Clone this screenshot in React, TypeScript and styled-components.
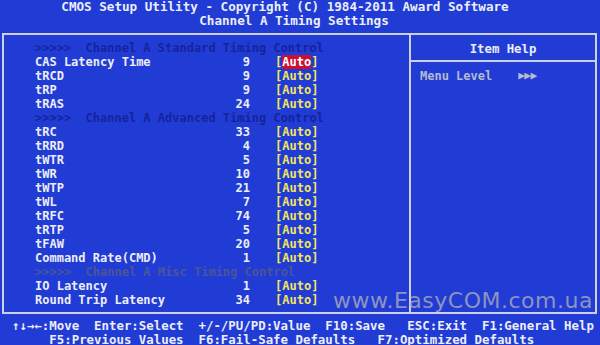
import React from "react";
import styled, { createGlobalStyle } from "styled-components";

const Global = createGlobalStyle`
  html, body { margin: 0; padding: 0; background: #213cd5; }
  #root { width: 600px; height: 345px; }
`;

const BLUE = "#213cd5";
const LINE = "#cdd0e2";
const MONO = `"DejaVu Sans Mono", "Liberation Mono", monospace`;

const Screen = styled.div`
  position: relative;
  width: 600px;
  height: 345px;
  overflow: hidden;
  background: ${BLUE};
  font-family: ${MONO};
  font-weight: bold;
  color: #eceef8;
  display: flex;
  flex-direction: column;
  & > * { flex-shrink: 0; }
`;

const Header = styled.header`
  display: flex;
  flex-direction: column;
  align-items: center;
  font-size: 12.6px;
  line-height: 13.5px;
  white-space: pre;
`;

const TitleLine = styled.div<{ $shift: number }>`
  margin-right: ${(p) => p.$shift}px;
`;

const Frame = styled.main`
  margin: 6px 3px 0 2px;
  height: 281px;
  box-sizing: border-box;
  border: 2px solid ${LINE};
  display: grid;
  grid-template-columns: 405px 1fr;
`;

const LeftPanel = styled.section`
  padding: 6px 0 0 31px;
  display: flex;
  flex-direction: column;
  font-size: 12px;
  line-height: 14px;
`;

const Row = styled.div`
  display: grid;
  grid-template-columns: 180px 35px 1fr;
  white-space: pre;
`;

const GroupTitle = styled.div<{ $dim?: boolean }>`
  white-space: pre;
  color: ${(p) => (p.$dim ? "#4a5598" : "#16239c")};
`;

const Label = styled.span``;

const Value = styled.span`
  text-align: right;
`;

const Option = styled.span`
  padding-left: 25px;
  color: #f1e65a;
`;

const OptionText = styled.span<{ $active?: boolean }>`
  background: ${(p) => (p.$active ? "#cc1030" : "transparent")};
  color: ${(p) => (p.$active ? "#ffffff" : "#f1e65a")};
`;

const RightPanel = styled.aside`
  border-left: 2px solid ${LINE};
  display: flex;
  flex-direction: column;
`;

const HelpHead = styled.div`
  height: 27px;
  border-bottom: 2px solid ${LINE};
  display: flex;
  align-items: center;
  justify-content: center;
  font-size: 12.3px;
  padding-top: 2px;
  box-sizing: border-box;
`;

const HelpBody = styled.div`
  padding: 7px 0 0 9px;
  font-size: 12px;
  line-height: 14px;
  color: #b6bad2;
  white-space: pre;
  display: flex;
  align-items: center;
`;

const Arrows = styled.span`
  margin-left: 26px;
  font-size: 11px;
  letter-spacing: -0.5px;
`;

const Footer = styled.footer`
  margin-top: 5px;
  padding-left: 12px;
  font-size: 12.4px;
  line-height: 14px;
  white-space: pre;
`;

const Watermark = styled.div`
  position: absolute;
  left: 333px;
  top: 288px;
  font-family: "DejaVu Sans", Verdana, sans-serif;
  font-weight: normal;
  font-size: 22px;
  letter-spacing: 0.5px;
  color: rgba(178, 178, 182, 0.75);
  white-space: nowrap;
`;

type Item =
  | { kind: "group"; text: string; dim?: boolean }
  | { kind: "row"; label: string; value: string; active?: boolean };

const items: Item[] = [
  { kind: "group", text: ">>>>>  Channel A Standard Timing Control" },
  { kind: "row", label: "CAS Latency Time", value: "9", active: true },
  { kind: "row", label: "tRCD", value: "9" },
  { kind: "row", label: "tRP", value: "9" },
  { kind: "row", label: "tRAS", value: "24" },
  { kind: "group", text: ">>>>>  Channel A Advanced Timing Control" },
  { kind: "row", label: "tRC", value: "33" },
  { kind: "row", label: "tRRD", value: "4" },
  { kind: "row", label: "tWTR", value: "5" },
  { kind: "row", label: "tWR", value: "10" },
  { kind: "row", label: "tWTP", value: "21" },
  { kind: "row", label: "tWL", value: "7" },
  { kind: "row", label: "tRFC", value: "74" },
  { kind: "row", label: "tRTP", value: "5" },
  { kind: "row", label: "tFAW", value: "20" },
  { kind: "row", label: "Command Rate(CMD)", value: "1" },
  { kind: "group", text: ">>>>>  Channel A Misc Timing Control", dim: true },
  { kind: "row", label: "IO Latency", value: "1" },
  { kind: "row", label: "Round Trip Latency", value: "34" },
];

export default function App() {
  return (
    <>
      <Global />
      <Screen>
        <Header>
          <TitleLine $shift={30}>CMOS Setup Utility - Copyright (C) 1984-2011 Award Software</TitleLine>
          <TitleLine $shift={12}>Channel A Timing Settings</TitleLine>
        </Header>
        <Frame>
          <LeftPanel>
            {items.map((it, i) =>
              it.kind === "group" ? (
                <GroupTitle key={i} $dim={it.dim}>{it.text}</GroupTitle>
              ) : (
                <Row key={i}>
                  <Label>{it.label}</Label>
                  <Value>{it.value}</Value>
                  <Option>
                    [<OptionText $active={it.active}>Auto</OptionText>]
                  </Option>
                </Row>
              )
            )}
          </LeftPanel>
          <RightPanel>
            <HelpHead>Item Help</HelpHead>
            <HelpBody>
              Menu Level<Arrows>▶▶▶</Arrows>
            </HelpBody>
          </RightPanel>
        </Frame>
        <Footer>
          <div>{"↑↓→←:Move  Enter:Select  +/-/PU/PD:Value  F10:Save   ESC:Exit  F1:General Help"}</div>
          <div>{"     F5:Previous Values  F6:Fail-Safe Defaults   F7:Optimized Defaults"}</div>
        </Footer>
        <Watermark>www.EasyCOM.com.ua</Watermark>
      </Screen>
    </>
  );
}
